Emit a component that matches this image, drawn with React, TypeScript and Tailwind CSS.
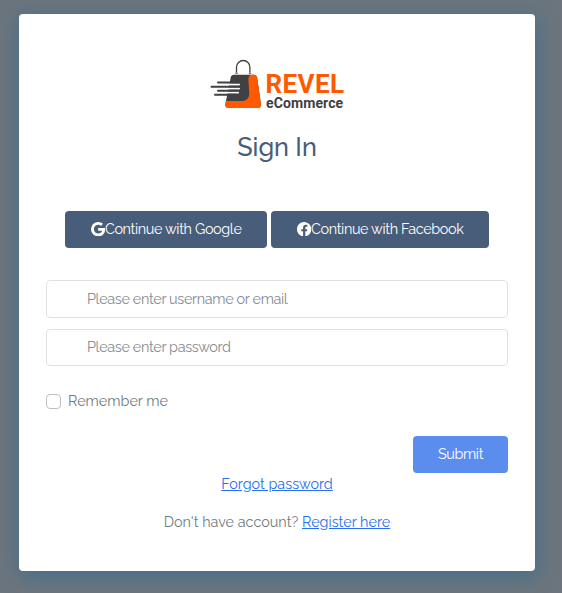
import React from 'react';

function Logo() {
  return (
    <div className="flex h-[50px] w-[135px] items-start">
      <svg width="52" height="50" viewBox="0 0 52 50" fill="none" className="shrink-0">
        <path d="M26.500 13.500V8.200a6.700 6.700 0 0 1 13.400 0v5.300" stroke="#414042" strokeWidth="1.300" />
        <path d="M25.400 14.200h2.300M38.800 14.200h2.300" stroke="#414042" strokeWidth="1.100" />
        <path d="M24 15.700H44a3.200 3.200 0 0 1 3.100 2.600l3.900 27A3.200 3.200 0 0 1 47.800 49H18.300a3 3 0 0 1-3-3.400L20.700 18.500A3.400 3.400 0 0 1 24 15.700Z" fill="#414042" />
        <path d="M42.200 15.700H44a3.200 3.200 0 0 1 3.100 2.600l3.900 27A3.200 3.200 0 0 1 47.800 49H18.300a3 3 0 0 1-3-3.400l.8-3.500H30.500c6 0 9-2.900 8.700-8.400L38.400 21c-.2-3 1-5.300 3.800-5.300Z" fill="#ff5a00" />
        <path d="M15 25.600h14M15 29.600h14M15 33.600h13" stroke="white" strokeWidth="2" strokeLinecap="round" />
        <path d="M8 23.600h21M1.500 27.700h28.500M8 31.700h20M5 35.700h21" stroke="#414042" strokeWidth="2" strokeLinecap="round" />
      </svg>
      <div className="ml-[4px] flex flex-col whitespace-nowrap pt-[12px] font-['Roboto',sans-serif]">
        <span className="text-[26px] font-bold leading-[26px] tracking-[0.4px] text-[#ff5a00]">REVEL</span>
        <span className="-mt-px ml-[0.5px] text-[14px] font-bold leading-[14px] tracking-[0.1px] text-[#414042]">eCommerce</span>
      </div>
    </div>
  );
}

function GoogleIcon() {
  return (
    <svg width="14.4" height="14.4" viewBox="0 0 16 16" fill="currentColor" className="shrink-0">
      <path d="M15.545 6.558a9.400 9.400 0 0 1 .139 1.626c0 2.434-.870 4.492-2.384 5.885h.002C11.978 15.292 10.158 16 8 16A8 8 0 1 1 8 0a7.700 7.700 0 0 1 5.352 2.082l-2.284 2.284A4.350 4.350 0 0 0 8 3.166c-2.087 0-3.860 1.408-4.492 3.304a4.800 4.800 0 0 0 0 3.063h.003c.635 1.893 2.405 3.301 4.492 3.301 1.078 0 2.004-.276 2.722-.764h-.003a3.700 3.700 0 0 0 1.599-2.431H8v-3.080z" />
    </svg>
  );
}

function FacebookIcon() {
  return (
    <svg width="14.4" height="14.4" viewBox="0 0 16 16" fill="currentColor" className="shrink-0">
      <path d="M16 8.049c0-4.446-3.582-8.050-8-8.050C3.580 0-.002 3.603-.002 8.050c0 4.017 2.926 7.347 6.750 7.951v-5.625h-2.030V8.050H6.750V6.275c0-2.017 1.195-3.131 3.022-3.131.876 0 1.791.157 1.791.157v1.980h-1.009c-.993 0-1.303.621-1.303 1.258v1.510h2.218l-.354 2.326H9.250V16c3.824-.604 6.750-3.934 6.750-7.951" />
    </svg>
  );
}

export default function App() {
  return (
    <main className="h-[593px] w-[562px] overflow-hidden bg-[#6c757d] pl-[19px] pt-[14px] font-['Raleway','Lato',sans-serif] text-[14.4px] leading-[22px] text-[#6f7b80]">
      <section className="flex h-[557px] w-[516px] flex-col rounded-[4px] bg-white px-[27px] pt-[45px] shadow-[0_4px_20px_rgba(49,108,147,0.8)]">
        <div className="flex justify-center"><Logo /></div>
        <h1 className="mt-[22px] text-center text-[25.2px] font-medium leading-[32px] text-[#475d79]">Sign In</h1>
        <div className="mt-[48px] flex justify-center gap-1 tracking-[-0.36px] text-white">
          <button className="flex h-[37px] w-[202px] items-center justify-center whitespace-nowrap rounded-[4px] bg-[#475d79] pb-px">
            <GoogleIcon /><span>Continue with Google</span>
          </button>
          <button className="flex h-[37px] w-[218px] items-center justify-center whitespace-nowrap rounded-[4px] bg-[#475d79] pb-px">
            <FacebookIcon /><span>Continue with Facebook</span>
          </button>
        </div>
        <form className="mt-8 flex flex-col">
          <input className="h-[38px] rounded-[4px] border border-[#dee2e6] pb-[2px] pl-10 tracking-[-0.34px] placeholder:text-[#858c93]" placeholder="Please enter username or email" />
          <input className="mt-[11px] h-[37px] rounded-[4px] border border-[#dee2e6] pb-[2px] pl-10 tracking-[-0.34px] placeholder:text-[#858c93]" placeholder="Please enter password" />
          <label className="mt-6 flex h-[22px] items-center">
            <input type="checkbox" className="size-[15px] appearance-none rounded-[4px] border border-[#bfbfbf]" />
            <span className="ml-[7px]">Remember me</span>
          </label>
          <button type="button" className="mt-6 h-[37px] w-[95px] self-end rounded-[4px] bg-[#5b8def] pb-[2px] tracking-[-0.36px] text-white">Submit</button>
        </form>
        <div className="text-center"><a className="text-[#276ef1] underline">Forgot password</a></div>
        <p className="mt-4 text-center"><span>Don't have account? </span><a className="text-[#276ef1] underline">Register here</a></p>
      </section>
    </main>
  );
}
